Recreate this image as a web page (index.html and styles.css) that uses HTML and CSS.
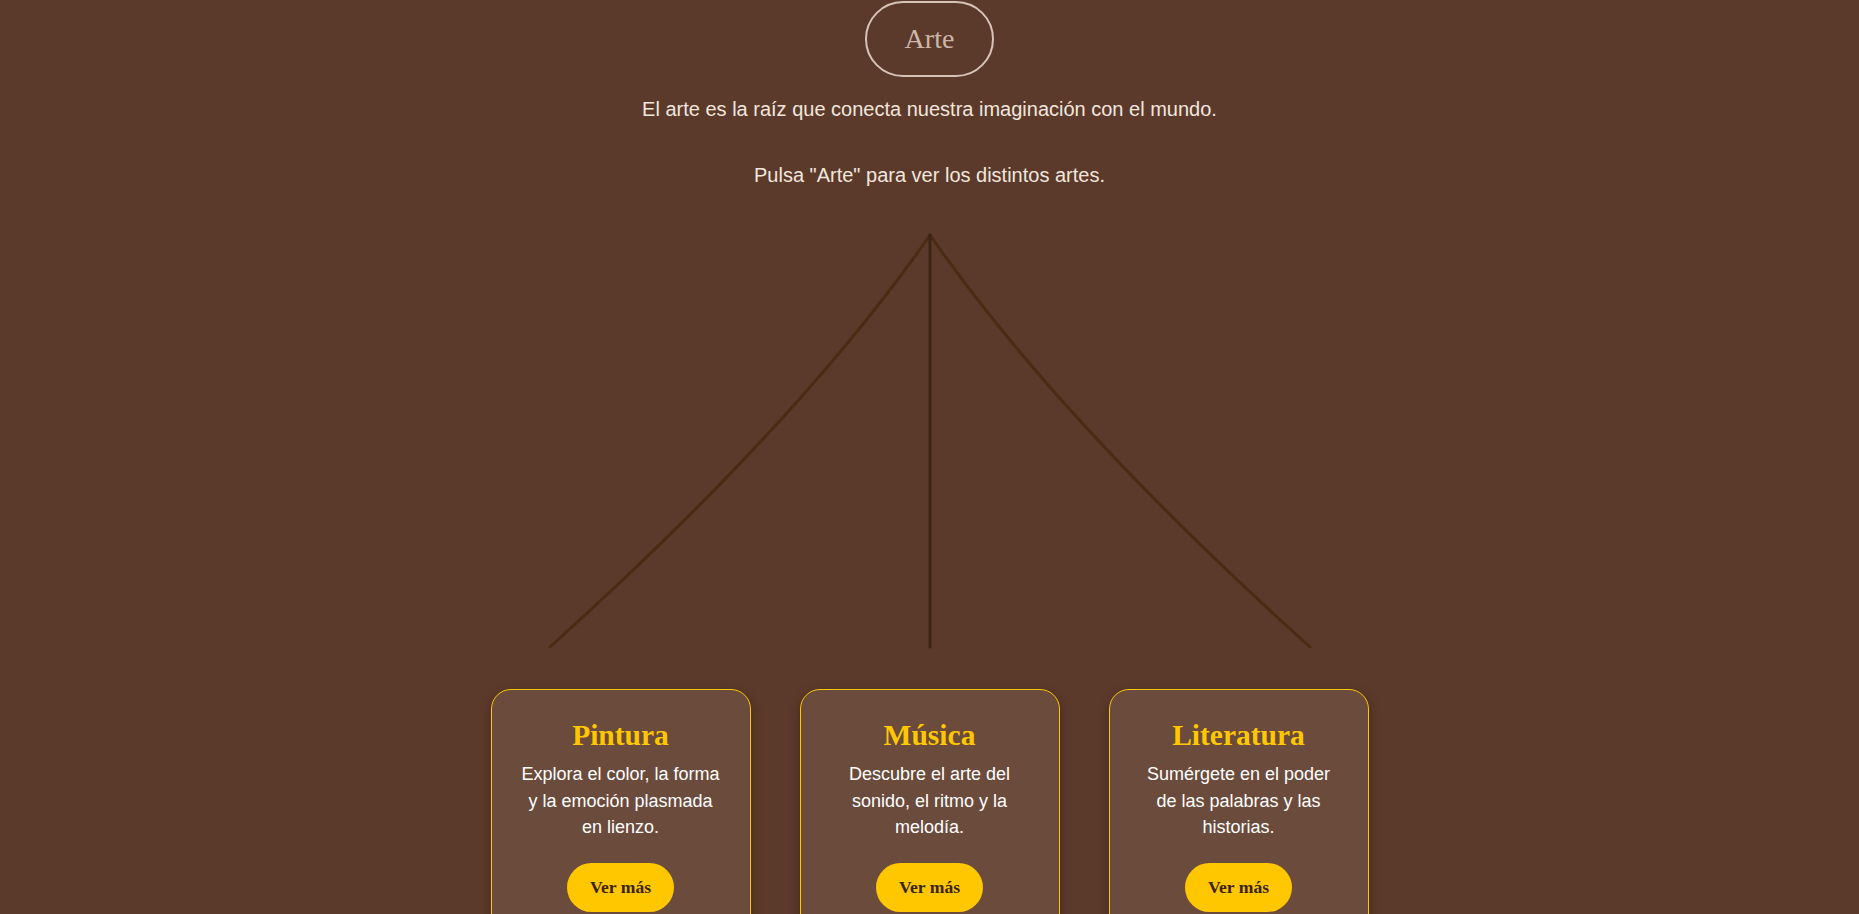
FILE: index.html
```html
<!DOCTYPE html>
<html lang="es">
<head>
<meta charset="utf-8">
<title>Arte</title>
<link rel="stylesheet" href="styles.css">
</head>
<body>
<main class="page">
  <header class="intro">
    <button class="root-btn" type="button">Arte</button>
    <p class="intro-text first">El arte es la raíz que conecta nuestra imaginación con el mundo.</p>
    <p class="intro-text second">Pulsa "Arte" para ver los distintos artes.</p>
  </header>

  <svg class="branches" width="820" height="460" viewBox="0 0 820 460" aria-hidden="true">
    <path class="branch side" d="M410 34 Q281 220 30 446" />
    <path class="branch side" d="M410 34 Q539 220 790 446" />
    <path class="branch trunk" d="M410 34 L410 446" />
  </svg>

  <section class="cards">
    <article class="card">
      <h2 class="card-title">Pintura</h2>
      <p class="card-text">Explora el color, la forma y la emoción plasmada en lienzo.</p>
      <button class="card-btn" type="button">Ver más</button>
    </article>
    <article class="card">
      <h2 class="card-title">Música</h2>
      <p class="card-text">Descubre el arte del sonido, el ritmo y la melodía.</p>
      <button class="card-btn" type="button">Ver más</button>
    </article>
    <article class="card">
      <h2 class="card-title">Literatura</h2>
      <p class="card-text">Sumérgete en el poder de las palabras y las historias.</p>
      <button class="card-btn" type="button">Ver más</button>
    </article>
  </section>
</main>
</body>
</html>
```

FILE: styles.css
```css
html {
  overflow: hidden;
}

body {
  margin: 0;
  background: #5c3a2b;
  font-family: "Liberation Sans", Arial, sans-serif;
  color: #f1e6de;
}

.page {
  display: flex;
  flex-direction: column;
  align-items: center;
  padding-top: 1px;
}

.intro {
  display: flex;
  flex-direction: column;
  align-items: center;
}

.root-btn {
  font-family: "Liberation Serif", "Times New Roman", serif;
  font-size: 28px;
  line-height: normal;
  color: #cbb6a9;
  background: transparent;
  border: 2px solid #d6c3b7;
  border-radius: 40px;
  padding: 20px 38px;
  margin: 0;
  cursor: pointer;
}

.intro-text {
  font-size: 20px;
  line-height: 23px;
  margin: 0;
  text-align: center;
}

.intro-text.first {
  margin-top: 20.6px;
}

.intro-text.second {
  margin-top: 43px;
}

.branches {
  display: block;
  margin-top: 14.4px;
}

.branch {
  fill: none;
  stroke-width: 3;
  stroke-linecap: round;
}

.branch.side {
  stroke: #4a2b13;
}

.branch.trunk {
  stroke: #3c2414;
}

.cards {
  display: flex;
  gap: 49px;
  margin-top: 28px;
}

.card {
  box-sizing: border-box;
  width: 260px;
  background: #6b4b3c;
  border: 1px solid #ffc700;
  border-radius: 20px;
  padding: 29px 28px 30px;
  box-shadow: 0 4px 12px rgba(0, 0, 0, 0.3);
  display: flex;
  flex-direction: column;
  align-items: center;
  text-align: center;
}

.card-title {
  font-family: "Liberation Serif", "Times New Roman", serif;
  font-weight: bold;
  font-size: 29.5px;
  line-height: normal;
  color: #ffc700;
  margin: 0 0 9px;
}

.card-text {
  font-size: 18px;
  line-height: 26.7px;
  color: #ffffff;
  margin: 0 0 22px;
}

.card-btn {
  font-family: "Liberation Serif", "Times New Roman", serif;
  font-weight: bold;
  font-size: 17.6px;
  line-height: normal;
  color: #3a2312;
  background: #ffc700;
  border: none;
  border-radius: 25px;
  padding: 14px 22.5px;
  cursor: pointer;
}
```
